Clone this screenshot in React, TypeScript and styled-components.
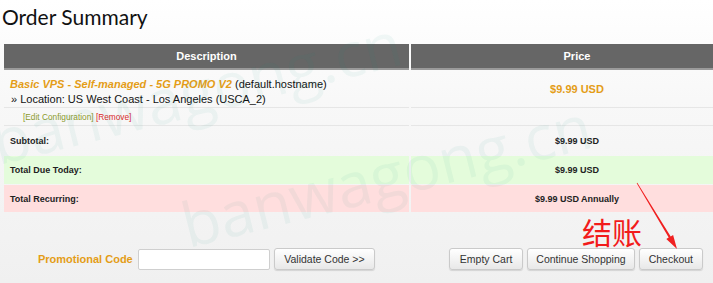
import React from 'react';
import styled, { createGlobalStyle } from 'styled-components';

const Global = createGlobalStyle`
  html, body { margin: 0; padding: 0; }
  body {
    width: 713px;
    height: 283px;
    overflow: hidden;
    background: linear-gradient(#ffffff 0px, #f8f8f8 100px, #f0f0f0 283px);
    font-family: "Liberation Sans", Arial, sans-serif;
    color: #111;
  }
`;

const Page = styled.div`
  position: relative;
  width: 739px;
  padding-left: 4px;
`;

const Title = styled.h1`
  margin: 0 0 0 -2px;
  height: 44px;
  padding-top: 4px;
  box-sizing: border-box;
  font-family: Lato, "Open Sans", sans-serif;
  font-weight: 400;
  font-size: 21px;
  line-height: 26px;
  color: #111;
`;

const Table = styled.div`
  display: grid;
  grid-template-columns: 405px 332px;
  column-gap: 2px;
`;

const HeadCell = styled.div`
  height: 26px;
  box-sizing: border-box;
  background: #666666;
  border-bottom: 2px solid #9a9a9a;
  color: #fff;
  font-weight: bold;
  font-size: 11px;
  line-height: 24px;
  text-align: center;
`;

const Cell = styled.div<{ $h: number; $bg?: string; $center?: boolean; $line?: boolean; $gapTop?: boolean }>`
  height: ${(p) => p.$h}px;
  box-sizing: border-box;
  background: ${(p) => p.$bg || 'transparent'};
  border-bottom: ${(p) => (p.$line ? '1px solid #e6e6e6' : 'none')};
  margin-top: ${(p) => (p.$gapTop ? '1px' : '0')};
  display: flex;
  align-items: center;
  justify-content: ${(p) => (p.$center ? 'center' : 'flex-start')};
  padding-left: ${(p) => (p.$center ? '0' : '6px')};
`;

const ProductCell = styled.div`
  height: 38px;
  box-sizing: border-box;
  border-bottom: 1px solid #e6e6e6;
  padding: 7px 0 0 6px;
  font-size: 11px;
  line-height: 15px;
  color: #111;
`;

const ProductName = styled.span`
  color: #e49d17;
  font-weight: bold;
  font-style: italic;
`;

const Location = styled.div`
  padding-left: 1px;
`;

const Price = styled.span`
  color: #e49d17;
  font-weight: bold;
  font-size: 11px;
`;

const ConfigCell = styled.div`
  height: 18px;
  box-sizing: border-box;
  border-bottom: 1px solid #e6e6e6;
  padding-left: 19px;
  font-size: 8.3px;
  line-height: 18px;
`;

const ConfigLink = styled.span<{ $red?: boolean }>`
  color: ${(p) => (p.$red ? '#d9282a' : '#8c9a2c')};
`;

const Label = styled.span`
  font-family: "Liberation Sans", Arial, sans-serif;
  font-weight: bold;
  font-size: 9px;
  color: #222;
`;

const Footer = styled.div`
  display: flex;
  align-items: center;
  justify-content: space-between;
  padding: 36px 40px 0 34px;
`;

const Group = styled.div`
  display: flex;
  align-items: center;
  gap: 4px;
`;

const PromoLabel = styled.span`
  color: #e49d17;
  font-weight: bold;
  font-size: 11px;
  margin-right: 1px;
`;

const Input = styled.input`
  width: 132px;
  height: 21px;
  box-sizing: border-box;
  border: 1px solid #cfcfcf;
  border-radius: 2px;
  background: #fff;
  margin: 0;
`;

const Button = styled.button<{ $pad?: number }>`
  height: 22px;
  box-sizing: border-box;
  padding: 0 ${(p) => p.$pad ?? 9}px;
  margin: 0;
  border: 1px solid #cacaca;
  border-radius: 3px;
  background: linear-gradient(#ffffff, #e8e8e8);
  box-shadow: 0 1px 1px rgba(0, 0, 0, 0.12);
  font-family: "Liberation Sans", Arial, sans-serif;
  font-size: 10.5px;
  color: #333;
`;

const Note = styled.div`
  position: absolute;
  left: 582px;
  top: 215px;
  font-family: "Noto Sans CJK SC", sans-serif;
  font-size: 30px;
  line-height: 32px;
  color: #f21b1b;
`;

const Arrow = styled.svg`
  position: absolute;
  left: 630px;
  top: 180px;
  width: 55px;
  height: 75px;
`;

const Watermark = styled.span<{ $x: number; $y: number }>`
  position: absolute;
  left: ${(p) => p.$x}px;
  top: ${(p) => p.$y}px;
  font-family: "Open Sans", sans-serif;
  font-weight: 400;
  font-size: 62px;
  line-height: 62px;
  color: rgba(20, 140, 125, 0.055);
  transform: rotate(-14deg);
  transform-origin: 0 100%;
  white-space: nowrap;
  pointer-events: none;
`;

export default function App() {
  return (
    <>
      <Global />
      <Page>
        <Title>Order Summary</Title>
        <Table>
          <HeadCell>Description</HeadCell>
          <HeadCell>Price</HeadCell>

          <ProductCell>
            <ProductName>Basic VPS - Self-managed - 5G PROMO V2</ProductName> (default.hostname)
            <Location>» Location: US West Coast - Los Angeles (USCA_2)</Location>
          </ProductCell>
          <Cell $h={38} $center $line>
            <Price>$9.99 USD</Price>
          </Cell>

          <ConfigCell>
            <ConfigLink>[Edit Configuration]</ConfigLink> <ConfigLink $red>[Remove]</ConfigLink>
          </ConfigCell>
          <Cell $h={18} $line />

          <Cell $h={29}>
            <Label>Subtotal:</Label>
          </Cell>
          <Cell $h={29} $center>
            <Label>$9.99 USD</Label>
          </Cell>

          <Cell $h={28} $bg="#e4fcdb" $gapTop>
            <Label>Total Due Today:</Label>
          </Cell>
          <Cell $h={28} $bg="#e4fcdb" $center $gapTop>
            <Label>$9.99 USD</Label>
          </Cell>

          <Cell $h={27} $bg="#ffdede" $gapTop>
            <Label>Total Recurring:</Label>
          </Cell>
          <Cell $h={27} $bg="#ffdede" $center $gapTop>
            <Label>$9.99 USD Annually</Label>
          </Cell>
        </Table>

        <Footer>
          <Group>
            <PromoLabel>Promotional Code</PromoLabel>
            <Input type="text" />
            <Button $pad={9.5}>Validate Code &gt;&gt;</Button>
          </Group>
          <Group>
            <Button $pad={10}>Empty Cart</Button>
            <Button $pad={8}>Continue Shopping</Button>
            <Button>Checkout</Button>
          </Group>
        </Footer>

        <Watermark $x={0} $y={110}>banwagong.cn</Watermark>
        <Watermark $x={190} $y={193}>banwagong.cn</Watermark>

        <Note>结账</Note>
        <Arrow viewBox="0 0 55 75">
          <polygon
            points="7.3,2.8 40.7,56.4 43.1,54.9 47,69 36.3,59.1 38.7,57.6 6.7,3.2"
            fill="#f02020"
          />
        </Arrow>
      </Page>
    </>
  );
}
